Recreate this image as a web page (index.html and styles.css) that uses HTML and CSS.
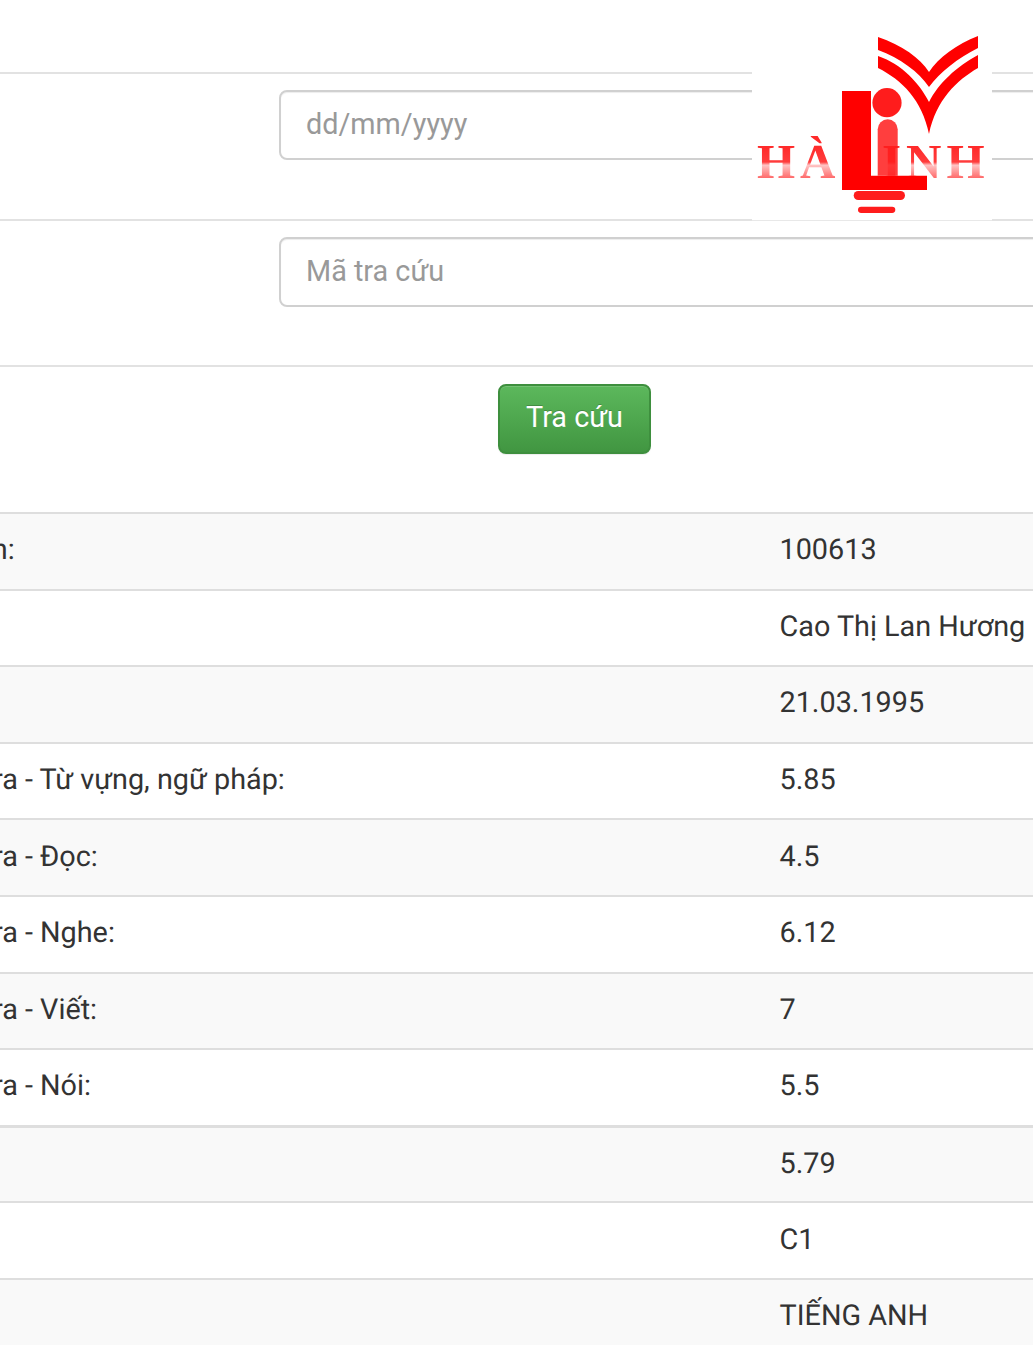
FILE: index.html
```html
<!DOCTYPE html>
<html lang="vi">
<head>
<meta charset="utf-8">
<title>Tra cứu</title>
<link rel="stylesheet" href="styles.css">
</head>
<body>
<div class="page">
  <div class="logo">
    <svg viewBox="0 0 240 220" width="240" height="220">
      <defs>
        <linearGradient id="fade" gradientUnits="userSpaceOnUse" x1="0" y1="146" x2="0" y2="178">
          <stop offset="0" stop-color="#ff2a2a"/>
          <stop offset="0.5" stop-color="#ff3c3c"/>
          <stop offset="0.6" stop-color="#ffc4c4"/>
          <stop offset="1" stop-color="#ff6a6a"/>
        </linearGradient>
      </defs>
      <text x="5" y="178" class="logo-text logo-ha" fill="url(#fade)">HÀ</text>
      <text x="130" y="178" class="logo-text logo-inh" fill="url(#fade)">INH</text>
      <path fill="#f00" d="M126 37C150 45 168 58 177 72C186 58 205 44 226 36V48C206 58 188 72 177 87C167 72 148 58 126 50Z"/>
      <path fill="#f00" d="M126 56C150 64 168 84 177 102C186 84 205 66 226 55V68C205 80 184 100 177 134C170 100 150 80 126 68Z"/>
      <path fill="#f00" d="M90 91H119V175.700H175V190H90Z"/>
      <circle cx="135" cy="102.700" r="14.600" fill="#ff1c1c"/>
      <path fill="#ff1c1c" opacity="0.85" d="M125.700 129.300a10 10 0 0 1 20 0V175.700H125.700Z"/>
      <rect x="101.700" y="191" width="51.300" height="9" rx="4.500" fill="#ff1c1c"/>
      <rect x="106" y="206.700" width="37.300" height="6.300" rx="3.150" fill="#ff1c1c"/>
    </svg>
  </div>

  <form class="form">
    <div class="form-row">
      <input class="field" type="text" placeholder="dd/mm/yyyy">
    </div>
    <div class="form-row">
      <input class="field" type="text" placeholder="Mã tra cứu">
    </div>
    <div class="form-row form-actions">
      <button class="btn" type="button">Tra cứu</button>
    </div>
  </form>

  <div class="results">
    <div class="row"><span class="label">Mã thí sinh:</span><span class="value">100613</span></div>
    <div class="row"><span class="label"></span><span class="value">Cao Thị Lan Hương</span></div>
    <div class="row"><span class="label"></span><span class="value">21.03.1995</span></div>
    <div class="row"><span class="label">Bài kiểm tra - Từ vựng, ngữ pháp:</span><span class="value">5.85</span></div>
    <div class="row"><span class="label">Bài kiểm tra - Đọc:</span><span class="value">4.5</span></div>
    <div class="row"><span class="label">Bài kiểm tra - Nghe:</span><span class="value">6.12</span></div>
    <div class="row"><span class="label">Bài kiểm tra - Viết:</span><span class="value">7</span></div>
    <div class="row row-thick"><span class="label">Bài kiểm tra - Nói:</span><span class="value">5.5</span></div>
    <div class="row"><span class="label"></span><span class="value">5.79</span></div>
    <div class="row"><span class="label"></span><span class="value">C1</span></div>
    <div class="row"><span class="label"></span><span class="value">TIẾNG ANH</span></div>
  </div>
</div>
</body>
</html>
```
FILE: styles.css
```css
html, body {
  margin: 0;
  padding: 0;
  height: 100%;
  overflow: hidden;
  background: #fff;
}
body {
  font-family: Roboto, "Noto Sans", sans-serif;
  font-size: 28.8px;
  color: #333;
  text-rendering: geometricPrecision;
}
.page {
  position: relative;
  width: 1033px;
  height: 1345px;
  overflow: hidden;
  padding-top: 72px;
  box-sizing: border-box;
}
.logo {
  position: absolute;
  left: 752px;
  top: 0;
  width: 240px;
  height: 220px;
  background: #fff;
  box-shadow: 0 1px 0 #e8e8e8;
}
.logo svg {
  display: block;
}
.logo-text {
  font-family: "Liberation Serif", serif;
  font-weight: 700;
  font-size: 49px;
}
.logo-ha {
  letter-spacing: 5px;
}
.logo-inh {
  letter-spacing: 5px;
}
.form-row {
  height: 146.67px;
  box-sizing: border-box;
  border-top: 2px solid #e2e2e2;
  padding: 16px 0 0 279px;
}
.form-actions {
  padding: 17px 0 0 498px;
}
.field {
  display: block;
  width: 900px;
  height: 70px;
  box-sizing: border-box;
  border: 2px solid #d0d0d0;
  border-radius: 8px;
  padding: 0 25px 2px;
  font: inherit;
  color: #555;
  background: #fff;
  box-shadow: inset 0 1px 1px rgba(0, 0, 0, 0.075);
  outline: none;
}
.field::placeholder {
  color: #999;
  opacity: 1;
}
.btn {
  display: block;
  width: 153px;
  height: 70px;
  box-sizing: border-box;
  border: 2px solid #3e8f3e;
  border-radius: 8px;
  padding: 0 0 5px;
  font: inherit;
  color: #fff;
  background: linear-gradient(to bottom, #5cb85c, #419641);
  box-shadow: inset 0 1px 0 rgba(255, 255, 255, 0.15), 0 1px 1px rgba(0, 0, 0, 0.075);
  text-shadow: 0 -1px 0 rgba(0, 0, 0, 0.2);
}
.results {
  margin-left: -133.5px;
  width: 1166.5px;
}
.row {
  display: grid;
  grid-template-columns: 913px 1fr;
  height: 76.6px;
  box-sizing: border-box;
  border-top: 2px solid #dedede;
  align-items: center;
  white-space: nowrap;
  padding-bottom: 2px;
}
.row:nth-child(odd) {
  background: #f9f9f9;
}
.row-thick + .row {
  border-top-width: 3px;
}
```
